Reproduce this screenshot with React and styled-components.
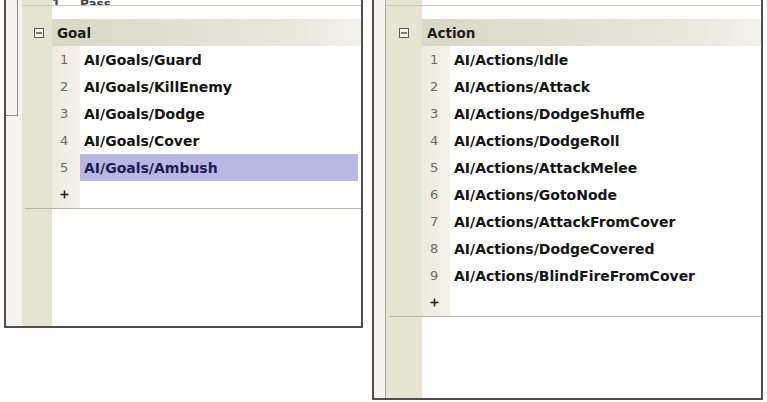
import React from 'react';
import styled, { createGlobalStyle } from 'styled-components';

const GlobalStyle = createGlobalStyle`
  html, body {
    margin: 0;
    background: #ffffff;
    overflow: hidden;
  }
  body {
    font-family: "DejaVu Sans", Tahoma, sans-serif;
  }
`

const Page = styled.div`
  display: flex;
  align-items: flex-start;
  gap: 9px;
  padding-left: 4px;
  width: 767px;
  height: 402px;
`

const Panel = styled.div`
  display: flex;
  width: ${p => p.$width}px;
  height: ${p => p.$height}px;
  border: 2px solid #4e4e4e;
  border-top: none;
  box-sizing: border-box;
  background: #ffffff;
`

const Strip = styled.div`
  width: ${p => p.$width}px;
  flex: none;
  background: #f5f4ee;
  border-right: ${p => (p.$line ? '1px solid #a9a89c' : 'none')};
`

const StripBox = styled.div`
  width: 11px;
  height: 115px;
  border-right: 1px solid #8f8e84;
  border-bottom: 1px solid #8f8e84;
`

const Body = styled.div`
  flex: 1;
  display: flex;
  flex-direction: column;
  background: linear-gradient(to right, #e5e3d1 ${p => p.$gutter}px, #ffffff ${p => p.$gutter}px);
`

const PrevRow = styled.div`
  height: 5px;
  overflow: hidden;
  border-bottom: 1px solid #c9c8bd;
  display: grid;
  grid-template-columns: ${p => p.$gutter}px ${p => p.$num}px 1fr;
  font-size: 12px;
  line-height: 8px;
  color: #444;
  span {
    font-weight: bold;
  }
  span:first-child {
    font-weight: normal;
    color: #666;
    padding-left: 8px;
  }
`

const Spacer = styled.div`
  height: 13px;
`

const Row = styled.div`
  display: grid;
  grid-template-columns: ${p => p.$gutter}px ${p => p.$num}px 1fr;
  height: 27px;
  flex: none;
`

const Expander = styled.div`
  display: flex;
  align-items: center;
  justify-content: ${p => p.$center ? 'center' : 'flex-start'};
  padding-left: ${p => p.$center ? 0 : 12}px;
`

const HeaderCell = styled.div`
  grid-column: 2 / 4;
  display: flex;
  align-items: center;
  padding-left: 5px;
  background: linear-gradient(to right, #d9d8c6, #e6e5d8 70%, #f1f0ea);
  font-size: 13.5px;
  font-weight: bold;
  color: #1d1d1d;
`

const NumCell = styled.div`
  display: flex;
  align-items: center;
  padding-left: 8px;
  background: linear-gradient(to right, #eceadc, #f4f3ec);
  font-size: 13px;
  color: #6a6a60;
`

const TextCell = styled.div`
  display: flex;
  align-items: center;
  padding-left: 4px;
  margin-right: ${p => p.$selected ? 3 : 0}px;
  background: ${p => p.$selected ? '#b8b8e2' : '#ffffff'};
  color: ${p => p.$selected ? '#1c1c58' : '#141414'};
  font-size: 14px;
  font-weight: bold;
  white-space: nowrap;
`

const EndLine = styled.div`
  height: 0;
  border-top: 1px solid #b4b3aa;
  margin-left: 3px;
`

const Fill = styled.div`
  flex: 1;
`

const MinusBox = () => (
  <svg width="10" height="10" viewBox="0 0 10 10">
    <rect x="0.5" y="0.5" width="9" height="9" fill="#f4f3ec" stroke="#5a5a5a" />
    <line x1="2" y1="5" x2="8" y2="5" stroke="#2a2a2a" strokeWidth="1.2" />
  </svg>
)

const Plus = () => (
  <svg width="9" height="9" viewBox="0 0 9 9">
    <line x1="4.5" y1="0.5" x2="4.5" y2="8.5" stroke="#222" strokeWidth="1.6" />
    <line x1="0.5" y1="4.5" x2="8.5" y2="4.5" stroke="#222" strokeWidth="1.6" />
  </svg>
)

const Table = ({ title, items, selected, gutter, num, center, prev }) => (
  <Body $gutter={gutter}>
    <PrevRow $gutter={gutter} $num={num}>
      <span />
      <span>{prev ? '1' : ''}</span>
      <span>{prev || ''}</span>
    </PrevRow>
    <Spacer />
    <Row $gutter={gutter} $num={num}>
      <Expander $center={center}><MinusBox /></Expander>
      <HeaderCell>{title}</HeaderCell>
    </Row>
    {items.map((item, i) => (
      <Row key={item} $gutter={gutter} $num={num}>
        <div />
        <NumCell>{i + 1}</NumCell>
        <TextCell $selected={i === selected}>{item}</TextCell>
      </Row>
    ))}
    <Row $gutter={gutter} $num={num}>
      <div />
      <NumCell><Plus /></NumCell>
      <TextCell />
    </Row>
    <EndLine />
    <Fill />
  </Body>
)

const goals = [
  'AI/Goals/Guard',
  'AI/Goals/KillEnemy',
  'AI/Goals/Dodge',
  'AI/Goals/Cover',
  'AI/Goals/Ambush',
]

const actions = [
  'AI/Actions/Idle',
  'AI/Actions/Attack',
  'AI/Actions/DodgeShuffle',
  'AI/Actions/DodgeRoll',
  'AI/Actions/AttackMelee',
  'AI/Actions/GotoNode',
  'AI/Actions/AttackFromCover',
  'AI/Actions/DodgeCovered',
  'AI/Actions/BlindFireFromCover',
]

const App = () => {
  return (
    <>
      <GlobalStyle />
      <Page>
        <Panel $width={359} $height={328}>
          <Strip $width={16}><StripBox /></Strip>
          <Table title="Goal" items={goals} selected={4} gutter={30} num={28} prev="Pass" />
        </Panel>
        <Panel $width={391} $height={400}>
          <Strip $width={11} $line />
          <Table title="Action" items={actions} selected={-1} gutter={36} num={28} center />
        </Panel>
      </Page>
    </>
  )
}

export default App
